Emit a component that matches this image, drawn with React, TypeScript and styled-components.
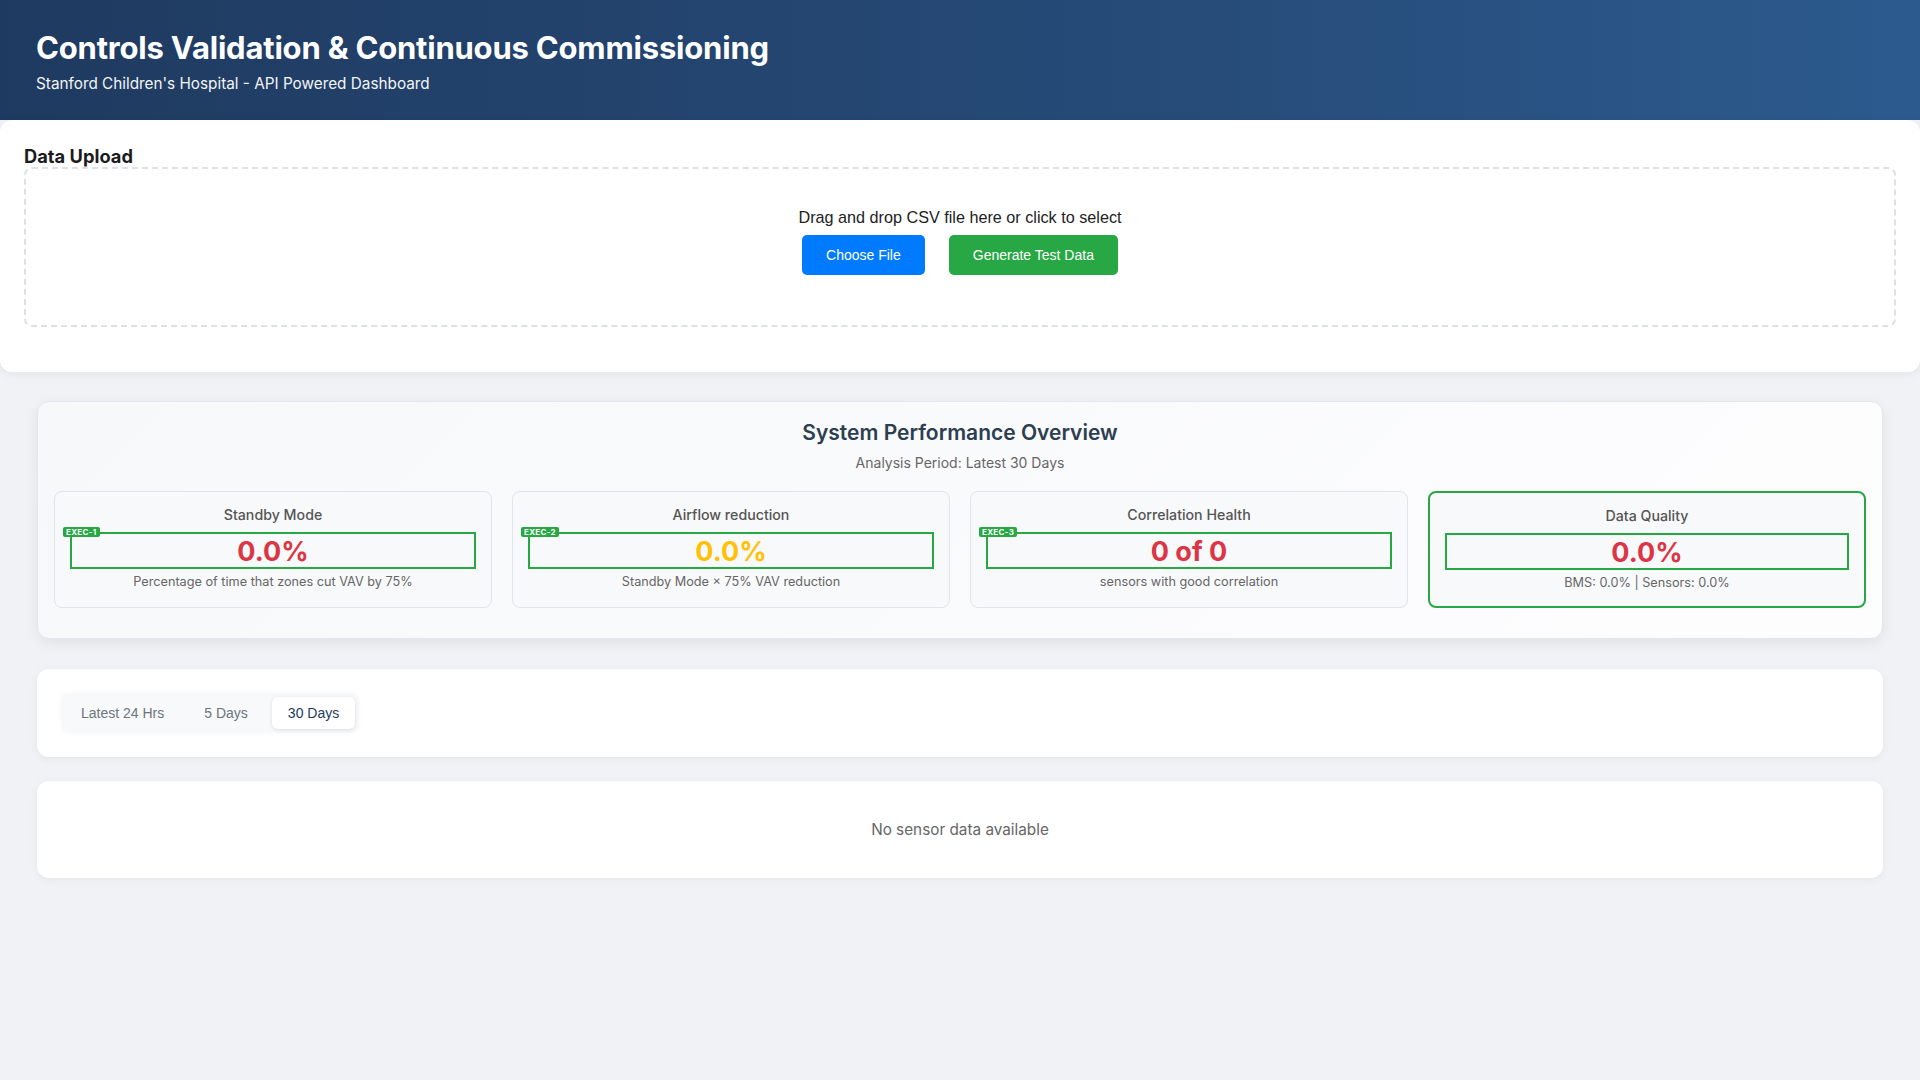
import styled, { createGlobalStyle } from "styled-components";

const GlobalStyle = createGlobalStyle`
  * {
    box-sizing: border-box;
  }
  html,
  body {
    margin: 0;
    padding: 0;
    background: #f0f2f5;
    font-family: Inter, "Noto Sans", "Liberation Sans", sans-serif;
    color: #333;
  }
  #root {
    min-height: 100vh;
  }
`;

// ヘッダー
const Header = styled.header`
  height: 120px;
  padding: 28px 36px 0;
  background: linear-gradient(90deg, #1f3a60 0%, #264b78 60%, #2c5a8e 100%);
  color: #fff;
`;

const Title = styled.h1`
  margin: 0;
  font-size: 31px;
  line-height: 40px;
  font-weight: 700;
  letter-spacing: -0.2px;
`;

const Subtitle = styled.p`
  margin: 6px 0 0;
  font-size: 15.3px;
  line-height: 20px;
  opacity: 0.95;
`;

// アップロード
const UploadCard = styled.section`
  background: #fff;
  border-radius: 12px;
  padding: 25px 24px 45px;
  box-shadow: 0 2px 10px rgba(0, 0, 0, 0.06);
`;

const SectionTitle = styled.h3`
  margin: 0;
  font-size: 18.3px;
  line-height: 22px;
  font-weight: 700;
  color: #1c1c1e;
`;

const DropZone = styled.div`
  border: 2px dashed #dde0e5;
  border-radius: 8px;
  padding: 38px 20px 50px;
  text-align: center;
`;

const DropText = styled.div`
  font-family: "Liberation Sans", Arial, sans-serif;
  font-size: 16.2px;
  line-height: 20px;
  color: #222;
  margin-bottom: 8px;
`;

const ButtonRow = styled.div`
  display: flex;
  justify-content: center;
  gap: 24px;
`;

const ActionButton = styled.button<{ $variant: "primary" | "success" }>`
  height: 40px;
  padding: 0 24px;
  border: none;
  border-radius: 5px;
  font-family: "Liberation Sans", Arial, sans-serif;
  font-size: 14px;
  color: #fff;
  cursor: pointer;
  background: ${(p) => (p.$variant === "primary" ? "#007bff" : "#28a745")};
`;

const Main = styled.main`
  padding: 29px 37px 40px;
`;

// 概要カード
const OverviewCard = styled.section`
  background: linear-gradient(135deg, #f7f8fa 0%, #fdfdfe 100%);
  border: 1px solid #e3e6ea;
  border-radius: 12px;
  padding: 17px 16px 30px;
  box-shadow: 0 4px 14px rgba(0, 0, 0, 0.07);
  text-align: center;
`;

const OverviewTitle = styled.h2`
  margin: 0;
  font-size: 21px;
  line-height: 28px;
  font-weight: 600;
  color: #2c3e50;
`;

const OverviewSubtitle = styled.p`
  margin: 7px 0 0;
  font-size: 14px;
  line-height: 18px;
  color: #666;
`;

const MetricGrid = styled.div`
  margin-top: 19px;
  display: grid;
  grid-template-columns: repeat(4, 1fr);
  gap: 20px;
`;

const MetricCard = styled.div<{ $highlight?: boolean }>`
  background: #f8f9fa;
  border: ${(p) => (p.$highlight ? "2px solid #28a745" : "1px solid #e1e4e8")};
  border-radius: 8px;
  padding: 14px 15px 15px;
  text-align: center;
`;

const MetricTitle = styled.div`
  font-size: 14.2px;
  line-height: 18px;
  font-weight: 500;
  color: #555;
`;

const ValueBox = styled.div<{ $color: string }>`
  position: relative;
  margin-top: 8px;
  padding-top: 3px;
  border: 2px solid #28a745;
  font-size: 27px;
  line-height: 30px;
  font-weight: 700;
  color: ${(p) => p.$color};
`;

const ExecBadge = styled.span`
  position: absolute;
  top: -7px;
  left: -9px;
  height: 10px;
  padding: 0 3px;
  border-radius: 2px;
  background: #28a745;
  color: #fff;
  font-size: 8px;
  line-height: 10px;
  font-weight: 700;
  letter-spacing: 0.3px;
`;

const MetricDesc = styled.div`
  margin-top: 5px;
  font-size: 12.7px;
  line-height: 16px;
  color: #666;
`;

// 期間タブ
const TabsCard = styled.section`
  margin-top: 30px;
  background: #fff;
  border-radius: 12px;
  padding: 24px;
  box-shadow: 0 2px 10px rgba(0, 0, 0, 0.05);
`;

const TabGroup = styled.div`
  display: inline-flex;
  gap: 8px;
  padding: 4px;
  background: #f8f9fa;
  border-radius: 8px;
  box-shadow: 0 0 4px rgba(0, 0, 0, 0.03);
`;

const Tab = styled.button<{ $active?: boolean }>`
  height: 32px;
  padding: 0 16px;
  border: none;
  border-radius: 6px;
  font-family: "Liberation Sans", Arial, sans-serif;
  font-size: 14px;
  cursor: pointer;
  background: ${(p) => (p.$active ? "#fff" : "transparent")};
  color: ${(p) => (p.$active ? "#1e3a5f" : "#6c757d")};
  box-shadow: ${(p) => (p.$active ? "0 1px 4px rgba(0,0,0,0.12)" : "none")};
`;

const EmptyCard = styled.section`
  margin-top: 24px;
  background: #fff;
  border-radius: 12px;
  padding: 39px;
  text-align: center;
  font-size: 15.3px;
  line-height: 19px;
  color: #666;
  box-shadow: 0 2px 10px rgba(0, 0, 0, 0.05);
`;

type Metric = {
  title: string;
  value: string;
  color: string;
  desc: string;
  badge?: string;
  highlight?: boolean;
};

const metrics: Metric[] = [
  {
    title: "Standby Mode",
    value: "0.0%",
    color: "#dc3545",
    desc: "Percentage of time that zones cut VAV by 75%",
    badge: "EXEC-1",
  },
  {
    title: "Airflow reduction",
    value: "0.0%",
    color: "#ffc107",
    desc: "Standby Mode × 75% VAV reduction",
    badge: "EXEC-2",
  },
  {
    title: "Correlation Health",
    value: "0 of 0",
    color: "#dc3545",
    desc: "sensors with good correlation",
    badge: "EXEC-3",
  },
  {
    title: "Data Quality",
    value: "0.0%",
    color: "#dc3545",
    desc: "BMS: 0.0% | Sensors: 0.0%",
    highlight: true,
  },
];

const periods = ["Latest 24 Hrs", "5 Days", "30 Days"];

const App = () => {
  return (
    <>
      <GlobalStyle />
      <Header>
        <Title>Controls Validation &amp; Continuous Commissioning</Title>
        <Subtitle>Stanford Children's Hospital - API Powered Dashboard</Subtitle>
      </Header>

      <UploadCard>
        <SectionTitle>Data Upload</SectionTitle>
        <DropZone>
          <DropText>Drag and drop CSV file here or click to select</DropText>
          <ButtonRow>
            <ActionButton $variant="primary">Choose File</ActionButton>
            <ActionButton $variant="success">Generate Test Data</ActionButton>
          </ButtonRow>
        </DropZone>
      </UploadCard>

      <Main>
        <OverviewCard>
          <OverviewTitle>System Performance Overview</OverviewTitle>
          <OverviewSubtitle>Analysis Period: Latest 30 Days</OverviewSubtitle>
          <MetricGrid>
            {metrics.map((m) => (
              <MetricCard key={m.title} $highlight={m.highlight}>
                <MetricTitle>{m.title}</MetricTitle>
                <ValueBox $color={m.color}>
                  {m.badge && <ExecBadge>{m.badge}</ExecBadge>}
                  {m.value}
                </ValueBox>
                <MetricDesc>{m.desc}</MetricDesc>
              </MetricCard>
            ))}
          </MetricGrid>
        </OverviewCard>

        <TabsCard>
          <TabGroup>
            {periods.map((p) => (
              <Tab key={p} $active={p === "30 Days"}>
                {p}
              </Tab>
            ))}
          </TabGroup>
        </TabsCard>

        <EmptyCard>No sensor data available</EmptyCard>
      </Main>
    </>
  );
};

export default App;
